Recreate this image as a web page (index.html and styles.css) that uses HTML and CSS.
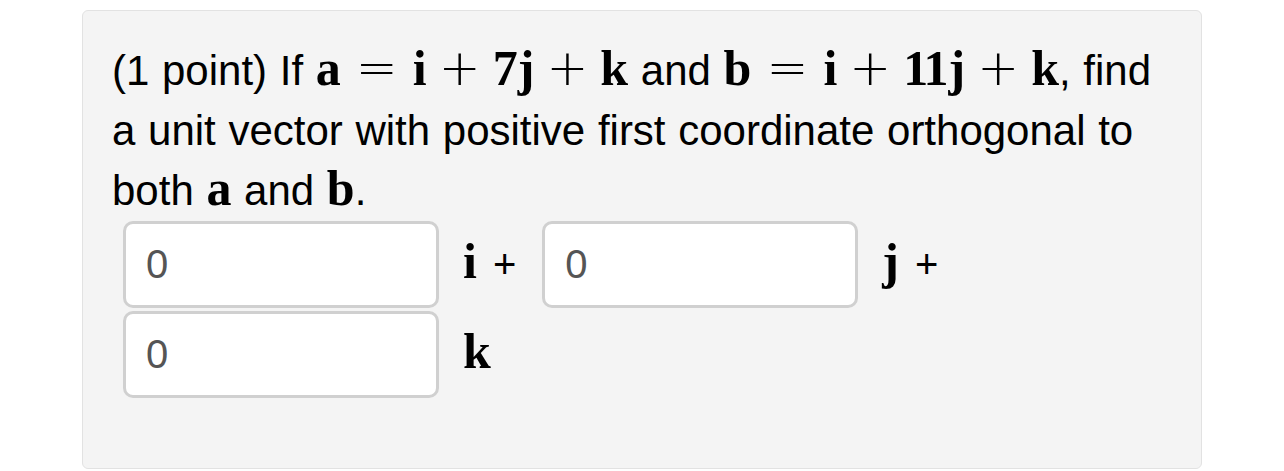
FILE: index.html
```html
<!DOCTYPE html>
<html>
<head>
<meta charset="utf-8">
<link rel="stylesheet" href="styles.css">
</head>
<body>
<div class="panel">
  <p class="problem">(1 point) If <span class="math"><span class="v">a</span><span class="op rel">=</span><span class="v">i</span><span class="op bin">+</span><span class="v">7j</span><span class="op bin">+</span><span class="v">k</span></span> and <span class="math"><span class="v">b</span><span class="op rel">=</span><span class="v">i</span><span class="op bin">+</span><span class="v num">11</span><span class="v">j</span><span class="op bin">+</span><span class="v">k</span></span>, find a unit vector with positive first coordinate orthogonal to both <span class="math"><span class="v">a</span></span> and <span class="math"><span class="v">b</span></span>.</p>
  <div class="answers">
    <div class="grp"><input class="ans" type="text" value="0"><span class="lbl"><span class="v">i</span><span class="plus">+</span></span></div>
    <div class="grp"><input class="ans" type="text" value="0"><span class="lbl"><span class="v">j</span><span class="plus">+</span></span></div>
    <div class="grp"><input class="ans" type="text" value="0"><span class="lbl"><span class="v">k</span></span></div>
  </div>
</div>
</body>
</html>
```
FILE: styles.css
```css
html, body {
  margin: 0;
  padding: 0;
  background: #ffffff;
}
body {
  font-family: "Liberation Sans", Arial, sans-serif;
  color: #000;
}
.panel {
  box-sizing: border-box;
  margin: 10px 0 0 82px;
  width: 1120px;
  height: 459px;
  background: #f4f4f4;
  border: 1px solid #e2e2e2;
  border-radius: 6px;
  padding: 30px 29px 0 29px;
}
.problem {
  margin: 0;
  font-size: 42px;
  line-height: 60px;
  word-spacing: 1px;
}
.math {
  white-space: nowrap;
  line-height: 0;
  word-spacing: 0;
}
.v {
  font-family: "Liberation Serif", "Times New Roman", serif;
  font-weight: bold;
  font-size: 50px;
  line-height: 0;
}
.num {
  letter-spacing: -2px;
  margin-right: 2px;
}
.op {
  display: inline-block;
  text-align: center;
  font-family: "DejaVu Sans", sans-serif;
  font-weight: 200;
  font-size: 50px;
  line-height: 0;
}
.rel {
  width: 72px;
}
.bin {
  width: 66px;
}
.answers {
  display: flex;
  flex-wrap: wrap;
  row-gap: 3px;
  padding-left: 11px;
}
.grp {
  display: flex;
  align-items: baseline;
}
.ans {
  box-sizing: border-box;
  width: 316px;
  height: 87px;
  margin: 0;
  padding: 0 20px;
  border: 3px solid #d0d0d0;
  border-radius: 10px;
  background: #fff;
  font-family: "Liberation Sans", Arial, sans-serif;
  font-size: 40px;
  color: #555;
  outline: none;
}
.lbl {
  display: flex;
  align-items: baseline;
  margin-left: 24px;
  margin-right: 26px;
}
.plus {
  font-family: "Liberation Sans", Arial, sans-serif;
  font-size: 40px;
  margin-left: 16px;
}
```
